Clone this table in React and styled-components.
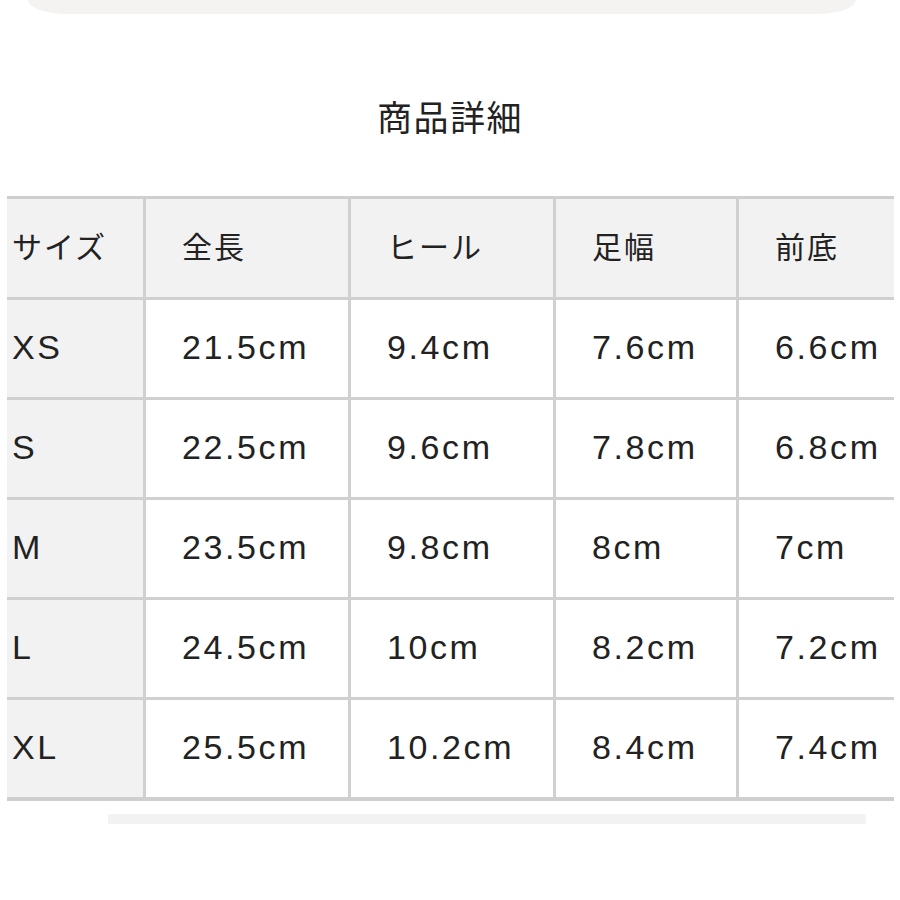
import React from "react";
import styled, { createGlobalStyle } from "styled-components";

const Global = createGlobalStyle`
  html, body { margin: 0; padding: 0; background: #fff; }
  body { font-family: "Noto Sans CJK JP", "Noto Sans", sans-serif; color: #222; }
`;

const Page = styled.div`
  width: 900px;
  height: 900px;
  display: flex;
  flex-direction: column;
  align-items: center;
  overflow: hidden;
`;

const TopCard = styled.div`
  width: 828px;
  height: 14px;
  background: #f4f3f2;
  border-radius: 0 0 40px 40px / 0 0 14px 14px;
  align-self: flex-start;
  margin-left: 28px;
`;

const Title = styled.h2`
  margin: 78px 0 0;
  height: 48px;
  font-size: 35px;
  font-weight: 400;
  line-height: 48px;
  letter-spacing: 1.5px;
  color: #222;
`;

const Table = styled.div`
  margin-top: 56px;
  align-self: flex-start;
  margin-left: 7px;
  width: 887px;
  display: grid;
  grid-template-columns: 136px 205px 205px 183px 158px;
  border-top: 3px solid #cfcfcf;
  border-bottom: 4px solid #cfcfcf;
`;

const Cell = styled.div`
  height: ${(p) => (p.$topRow ? "98px" : "100px")};
  display: flex;
  align-items: center;
  padding-left: ${(p) => (p.$first ? "5px" : "36px")};
  padding-bottom: ${(p) => (p.$topRow ? "6px" : "2px")};
  background: ${(p) => (p.$shade ? "#f2f2f2" : "#fff")};
  border-left: ${(p) => (p.$first ? "none" : "3px solid #d0d0d0")};
  border-top: ${(p) => (p.$topRow ? "none" : "3px solid #d0d0d0")};
  font-family: ${(p) =>
    p.$cjk
      ? '"Noto Sans CJK JP", sans-serif'
      : '"Liberation Sans", "Noto Sans CJK JP", sans-serif'};
  font-size: ${(p) => (p.$cjk ? "30px" : "34px")};
  letter-spacing: ${(p) => (p.$cjk ? "2px" : "2.6px")};
  color: #222;
  box-sizing: border-box;
`;

const BottomBar = styled.div`
  margin-top: 13px;
  align-self: flex-start;
  margin-left: 108px;
  width: 758px;
  height: 10px;
  background: #f2f2f2;
  border-radius: 2px;
`;

const header = ["サイズ", "全長", "ヒール", "足幅", "前底"];
const rows = [
  ["XS", "21.5cm", "9.4cm", "7.6cm", "6.6cm"],
  ["S", "22.5cm", "9.6cm", "7.8cm", "6.8cm"],
  ["M", "23.5cm", "9.8cm", "8cm", "7cm"],
  ["L", "24.5cm", "10cm", "8.2cm", "7.2cm"],
  ["XL", "25.5cm", "10.2cm", "8.4cm", "7.4cm"],
];

export default function App() {
  return (
    <>
      <Global />
      <Page>
        <TopCard />
        <Title>商品詳細</Title>
        <Table>
          {header.map((h, i) => (
            <Cell key={h} $first={i === 0} $topRow $shade $cjk>
              {h}
            </Cell>
          ))}
          {rows.map((r) =>
            r.map((v, i) => (
              <Cell key={r[0] + i} $first={i === 0} $shade={i === 0}>
                {v}
              </Cell>
            ))
          )}
        </Table>
        <BottomBar />
      </Page>
    </>
  );
}
